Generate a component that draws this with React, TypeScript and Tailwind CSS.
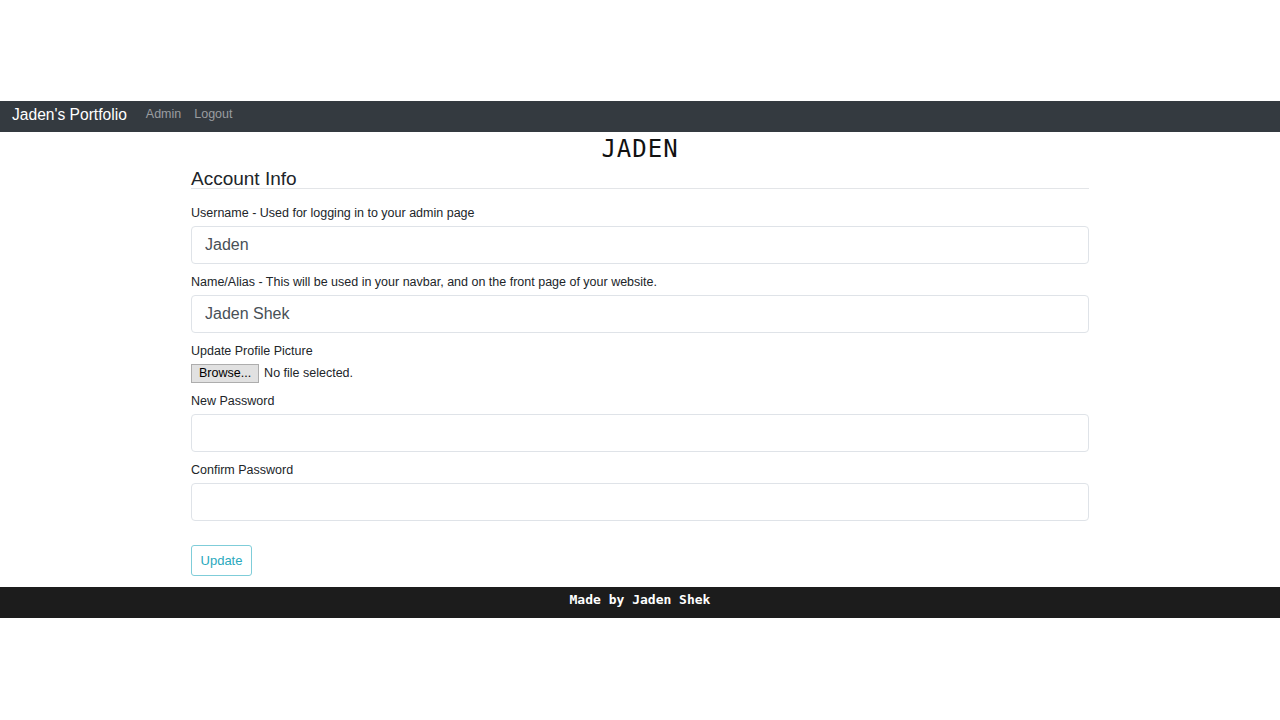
import React, { useState } from 'react';

export default function App() {
  const [username, setUsername] = useState('Jaden');
  const [alias, setAlias] = useState('Jaden Shek');
  const [password, setPassword] = useState('');
  const [confirm, setConfirm] = useState('');

  const inputCls =
    'block w-full h-[38px] px-[13px] rounded-[4px] border border-[#dfe3e8] bg-white text-[16px] text-[#495057] outline-none';
  const labelCls = 'block text-[12.5px] leading-[16px] mb-[5px]';

  return (
    <div className="min-h-[720px] bg-white font-['Liberation_Sans',Arial,sans-serif] text-[#212529]">
      <div className="h-[101px]" />

      {/* navbar */}
      <nav className="h-[31px] bg-[#343a40] flex items-center px-3 pb-[4px]">
        <span className="text-[15.6px] text-white mr-[19px]">Jaden's Portfolio</span>
        <a className="text-[12.5px] text-[#9a9da0] mr-[13px]">Admin</a>
        <a className="text-[12.5px] text-[#9a9da0]">Logout</a>
      </nav>

      <div className="w-[898px] mx-auto">
        <h1 className="text-center font-['DejaVu_Sans_Mono',monospace] text-[24px] leading-[30px] pt-[2px] tracking-[1px] text-[#111]">
          JADEN
        </h1>

        <h4 className="text-[19px] leading-[19px] mt-[5px] border-b border-[#e3e5e8]">Account Info</h4>

        <div className="mt-[16px]">
          <div className="mb-[10px]">
            <label className={labelCls}>Username - Used for logging in to your admin page</label>
            <input className={inputCls} value={username} onChange={e => setUsername(e.target.value)} />
          </div>

          <div className="mb-[10px]">
            <label className={labelCls}>Name/Alias - This will be used in your navbar, and on the front page of your website.</label>
            <input className={inputCls} value={alias} onChange={e => setAlias(e.target.value)} />
          </div>

          <div className="mb-[11px]">
            <label className={labelCls}>Update Profile Picture</label>
            <div className="flex items-center h-[18px]">
              <button className="h-[19px] px-[7px] bg-[#e1e1e1] border border-[#adadad] text-[12.5px] leading-[17px] text-black">Browse...</button>
              <span className="text-[12.5px] ml-[5px]">No file selected.</span>
            </div>
          </div>

          <div className="mb-[10px]">
            <label className={labelCls}>New Password</label>
            <input type="password" className={inputCls} value={password} onChange={e => setPassword(e.target.value)} />
          </div>

          <div className="mb-[10px]">
            <label className={labelCls}>Confirm Password</label>
            <input type="password" className={inputCls} value={confirm} onChange={e => setConfirm(e.target.value)} />
          </div>

          <button className="mt-[14px] h-[31px] w-[61px] rounded-[3px] border border-[#7fcdd9] text-[#2aa9bd] text-[13px] bg-white">
            Update
          </button>
        </div>
      </div>

      {/* footer */}
      <footer className="mt-[11px] h-[31px] bg-[#1c1c1c] flex items-center justify-center pb-[5px]">
        <span className="text-white font-['DejaVu_Sans_Mono',monospace] font-bold text-[13px]">Made by Jaden Shek</span>
      </footer>
    </div>
  );
}
